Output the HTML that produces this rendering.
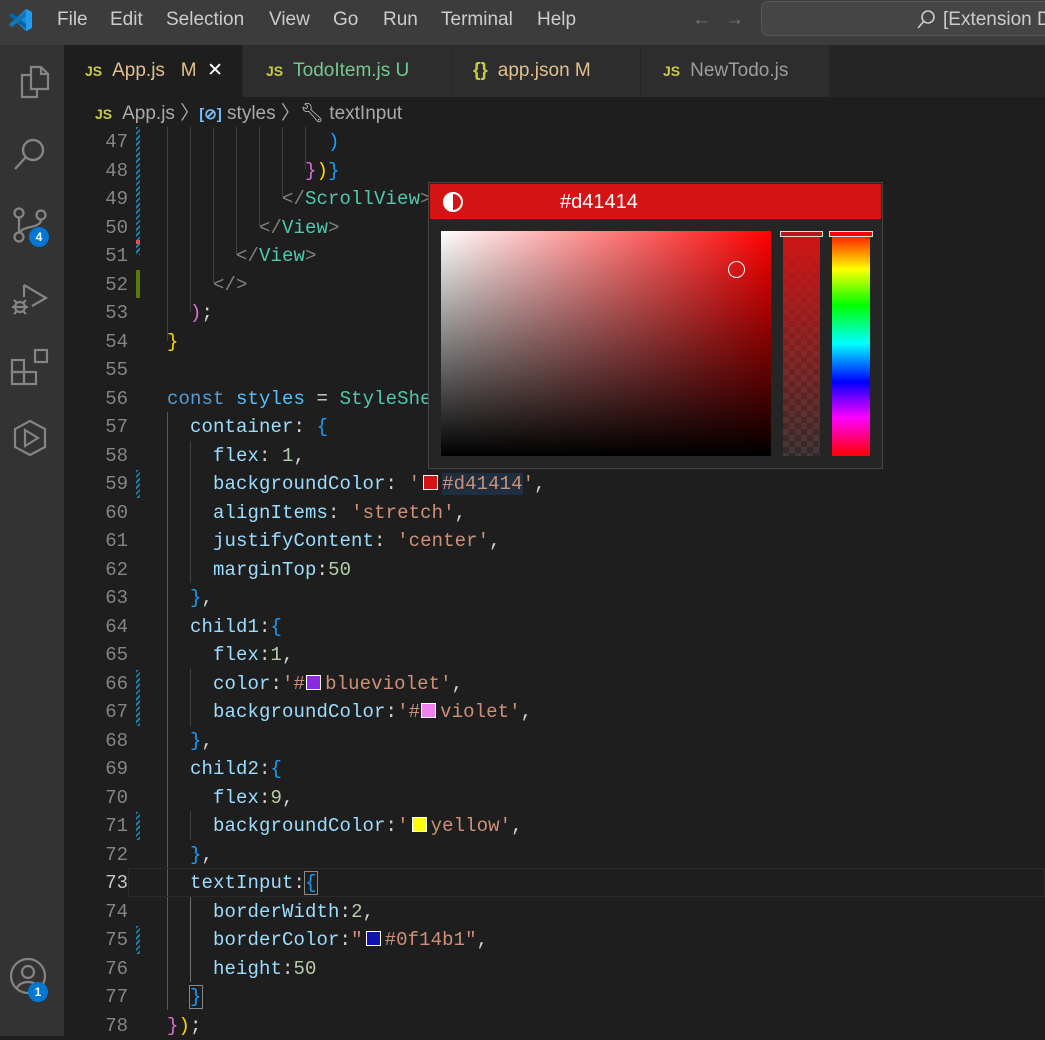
<!DOCTYPE html>
<html><head><meta charset="utf-8"><style>
*{margin:0;padding:0;box-sizing:border-box}
body{width:1045px;height:1036px;overflow:hidden;background:#1e1e1e;font-family:"Liberation Sans",sans-serif;position:relative}
.title{position:absolute;left:0;top:0;width:1045px;height:45px;background:#3c3c3c;color:#cccccc;font-size:19px;overflow:hidden}
.title span{position:absolute;top:9px;white-space:nowrap}
.act{position:absolute;left:0;top:45px;width:64px;height:991px;background:#333333}
.tabs{position:absolute;left:64px;top:45px;width:981px;height:52px;background:#252526}
.tab{position:absolute;top:0;height:52px;background:#2d2d2d;border-right:1px solid #252526;font-size:19px;line-height:52px;white-space:pre}
.js{color:#cbcb41;font-weight:bold;font-size:14px;margin-right:10px}
.bc{position:absolute;left:64px;top:97px;width:981px;height:33px;background:#1e1e1e;color:#a9a9a9;font-size:19px;line-height:33px;white-space:pre}
.ln{position:absolute;left:64px;width:64px;text-align:right;color:#858585;font-family:"Liberation Mono",monospace;font-size:19px;height:28.5px;line-height:28.5px}
.code{position:absolute;left:167px;font-family:"Liberation Mono",monospace;font-size:19px;height:28.5px;line-height:28.5px;white-space:pre;color:#d4d4d4;letter-spacing:0.1px}
.g{position:absolute;width:1px;background:#404040}
.dec{position:absolute;left:136px;width:4px;background:repeating-linear-gradient(135deg,#1b81a8 0 2px,#1e1e1e 2px 4px)}
.p{color:#9cdcfe}.s{color:#ce9178}.n{color:#b5cea8}.t{color:#808080}.c{color:#4ec9b0}.k{color:#569cd6}.v{color:#4fc1ff}
.b1{color:#ffd700}.b2{color:#da70d6}.b3{color:#179fff}
.sw{display:inline-block;width:15px;height:15px;border:1px solid #fff;vertical-align:-1px;margin:0 4px 0 3px}
.ic{position:absolute;left:10px}
.badge{position:absolute;width:20px;height:20px;border-radius:50%;background:#0078d4;color:#fff;font-size:12px;font-weight:bold;text-align:center;line-height:20px}
</style></head><body>
<div class="title">
<svg style="position:absolute;left:7px;top:7px" width="26" height="26" viewBox="0 0 26 26"><path d="M19 2 L25 5 V21 L19 24 L7 13 Z" fill="#2489ca"/><path d="M19 2 V24 L25 21 V5Z" fill="#1f9cf0"/><path d="M2 8 L5 6 L19 17 V22 L3 10Z" fill="#0065a9"/><path d="M2 18 L5 20 L19 9 V4 L3 16Z" fill="#1177bb"/></svg>
<span style="left:57px">File</span><span style="left:110px">Edit</span><span style="left:166px">Selection</span><span style="left:269px">View</span><span style="left:333px">Go</span><span style="left:383px">Run</span><span style="left:441px">Terminal</span><span style="left:537px">Help</span>
<span style="left:692px;color:#777">←</span><span style="left:725px;color:#777">→</span>
<div style="position:absolute;left:761px;top:1px;width:300px;height:35px;border:1px solid #555;border-radius:7px;background:#454545"></div>
<svg style="position:absolute;left:916px;top:9px" width="20" height="22" viewBox="0 0 20 22"><circle cx="12" cy="8" r="6" fill="none" stroke="#ccc" stroke-width="1.6"/><path d="M8 12 L2 19" stroke="#ccc" stroke-width="1.6"/></svg>
<span style="left:943px">[Extension De</span>
</div>
<div class="act">
<svg class="ic" style="top:18px" width="40" height="40" viewBox="0 0 40 40" fill="none" stroke="#858585" stroke-width="2.2"><path d="M21 4 H31 L38 11 V26 H21 Z"/><path d="M31 4 V11 H38"/><path d="M21 12 H12 V34 H27 V26"/></svg>
<svg class="ic" style="top:90px" width="40" height="40" viewBox="0 0 40 40" fill="none" stroke="#858585" stroke-width="2.4"><circle cx="23" cy="15" r="10"/><path d="M16 22 L5 34"/></svg>
<svg class="ic" style="top:160px" width="40" height="40" viewBox="0 0 40 40" fill="none" stroke="#858585" stroke-width="2.2"><circle cx="9" cy="8" r="4.5"/><circle cx="9" cy="32" r="4.5"/><circle cx="31" cy="10" r="4.5"/><path d="M9 12.5 V27.5 M31 14.5 C31 24 12 20 10 28"/></svg>
<div class="badge" style="left:29px;top:182px">4</div>
<svg class="ic" style="top:232px" width="40" height="40" viewBox="0 0 40 40" fill="none" stroke="#858585" stroke-width="2.2"><path d="M14 8 L36 21 L22 29"/><path d="M14 8 V20"/><circle cx="10" cy="30" r="5"/><path d="M2 30 H18 M4 23 L7 26 M16 23 L13 26 M4 37 L7 34 M16 37 L13 34"/></svg>
<svg class="ic" style="top:302px" width="40" height="40" viewBox="0 0 40 40" fill="none" stroke="#858585" stroke-width="2.2"><rect x="2" y="13" width="12" height="12"/><rect x="2" y="25" width="12" height="12"/><rect x="14" y="25" width="12" height="12"/><rect x="25" y="3" width="12" height="12"/></svg>
<svg class="ic" style="top:373px" width="40" height="40" viewBox="0 0 40 40" fill="none" stroke="#858585" stroke-width="2.2"><path d="M20 3 L35 11 V29 L20 37 L5 29 V11 Z"/><path d="M15 12 L28 20 L15 28 Z"/></svg>
<svg class="ic" style="top:913px" width="40" height="40" viewBox="0 0 40 40" fill="none" stroke="#858585" stroke-width="2.2"><circle cx="18" cy="18" r="17"/><circle cx="18" cy="14" r="6"/><path d="M7 30 C10 22 26 22 29 30"/></svg>
<div class="badge" style="left:28px;top:937px">1</div>
</div>
<div class="tabs">
<div class="tab" style="left:0;width:179px;background:#1e1e1e;padding-left:21px;color:#e2c08d"><span class="js">JS</span>App.js   M  <span style="color:#fff">✕</span></div>
<div class="tab" style="left:179px;width:210px;padding-left:23px;color:#73c991"><span class="js">JS</span>TodoItem.js U</div>
<div class="tab" style="left:389px;width:188px;padding-left:20px;color:#e2c08d"><span style="color:#cbcb41;font-weight:bold;margin-right:10px">{}</span>app.json M</div>
<div class="tab" style="left:577px;width:189px;padding-left:22px;color:#9d9d9d"><span class="js">JS</span>NewTodo.js</div>
</div>
<div class="bc"><span style="margin-left:31px" class="js">JS</span>App.js 〉<span style="color:#75beff;font-size:15px;font-weight:bold">[⊘]</span> styles 〉<span style="color:#ccc">🔧︎</span> textInput</div>

<div class="g" style="left:167px;top:127px;height:214px"></div>
<div class="g" style="left:190px;top:127px;height:185px"></div>
<div class="g" style="left:213px;top:127px;height:156px"></div>
<div class="g" style="left:236px;top:127px;height:128px"></div>
<div class="g" style="left:259px;top:127px;height:99px"></div>
<div class="g" style="left:282px;top:127px;height:71px"></div>
<div class="g" style="left:305px;top:127px;height:42px"></div>
<div class="g" style="left:167px;top:412px;height:598px;background:#5a5a5a"></div>
<div class="g" style="left:190px;top:441px;height:142px"></div>
<div class="g" style="left:190px;top:669px;height:57px"></div>
<div class="g" style="left:190px;top:811px;height:29px"></div>
<div class="g" style="left:190px;top:897px;height:85px;background:#707070"></div>

<div style="position:absolute;left:128px;top:868px;width:917px;height:29px;border:1px solid #2a2a2a"></div>

<div class="dec" style="top:127px;height:128px"></div>
<div style="position:absolute;left:136px;top:240px;width:4px;height:4px;background:#e05050"></div>
<div style="position:absolute;left:136px;top:270px;width:4px;height:28px;background:#587c0c"></div>
<div class="dec" style="top:470px;height:28px"></div>
<div class="dec" style="top:670px;height:56px"></div>
<div class="dec" style="top:812px;height:28px"></div>
<div class="dec" style="top:926px;height:28px"></div>

<div id="lines"></div>
<script>
var L=[
[47,'              <span class="b3">)</span>'],
[48,'            <span class="b2">}</span><span class="b1">)</span><span class="b3">}</span>'],
[49,'          <span class="t">&lt;/</span><span class="c">ScrollView</span><span class="t">&gt;</span>'],
[50,'        <span class="t">&lt;/</span><span class="c">View</span><span class="t">&gt;</span>'],
[51,'      <span class="t">&lt;/</span><span class="c">View</span><span class="t">&gt;</span>'],
[52,'    <span class="t">&lt;/&gt;</span>'],
[53,'  <span class="b2">)</span>;'],
[54,'<span class="b1">}</span>'],
[55,''],
[56,'<span class="k">const</span> <span class="v">styles</span> = <span class="c">StyleShe</span>'],
[57,'  <span class="p">container</span>: <span class="b3">{</span>'],
[58,'    <span class="p">flex</span>: <span class="n">1</span>,'],
[59,'    <span class="p">backgroundColor</span>: <span class="s">\'</span><span class="sw" style="background:#d41414"></span><span class="s" style="background:#1f2f3f">#d41414</span><span class="s">\'</span>,'],
[60,'    <span class="p">alignItems</span>: <span class="s">\'stretch\'</span>,'],
[61,'    <span class="p">justifyContent</span>: <span class="s">\'center\'</span>,'],
[62,'    <span class="p">marginTop</span>:<span class="n">50</span>'],
[63,'  <span class="b3">}</span>,'],
[64,'  <span class="p">child1</span>:<span class="b3">{</span>'],
[65,'    <span class="p">flex</span>:<span class="n">1</span>,'],
[66,'    <span class="p">color</span>:<span class="s">\'#</span><span class="sw" style="background:#8a2be2;margin-left:1px"></span><span class="s">blueviolet\'</span>,'],
[67,'    <span class="p">backgroundColor</span>:<span class="s">\'#</span><span class="sw" style="background:#ee82ee;margin-left:1px"></span><span class="s">violet\'</span>,'],
[68,'  <span class="b3">}</span>,'],
[69,'  <span class="p">child2</span>:<span class="b3">{</span>'],
[70,'    <span class="p">flex</span>:<span class="n">9</span>,'],
[71,'    <span class="p">backgroundColor</span>:<span class="s">\'</span><span class="sw" style="background:#ffff00"></span><span class="s">yellow\'</span>,'],
[72,'  <span class="b3">}</span>,'],
[73,'  <span class="p">textInput</span>:<span class="b3" style="outline:1px solid #888">{</span>'],
[74,'    <span class="p">borderWidth</span>:<span class="n">2</span>,'],
[75,'    <span class="p">borderColor</span>:<span class="s">"</span><span class="sw" style="background:#0f14b1"></span><span class="s">#0f14b1"</span>,'],
[76,'    <span class="p">height</span>:<span class="n">50</span>'],
[77,'  <span class="b3" style="outline:1px solid #888">}</span>'],
[78,'<span class="b2">}</span><span class="b1">)</span>;']
];
var h='';
L.forEach(function(l,i){var t=128+i*28.5;
h+='<div class="ln" style="top:'+t+'px;'+(l[0]==73?'color:#c6c6c6':'')+'">'+l[0]+'</div><div class="code" style="top:'+t+'px">'+l[1]+'</div>';});
document.getElementById('lines').innerHTML=h;
</script>

<div style="position:absolute;left:428px;top:182px;width:455px;height:287px;background:#252526;border:1px solid #454545">
<div style="position:absolute;left:1px;top:1px;width:451px;height:35px;background:#d41414;color:#fff;font-size:20px;line-height:36px">
<div style="position:absolute;left:13px;top:8px;width:20px;height:20px;border-radius:50%;border:2px solid #fff;background:linear-gradient(90deg,#fff 50%,transparent 50%)"></div>
<span style="position:absolute;left:130px">#d41414</span></div>
<div style="position:absolute;left:12px;top:48px;width:330px;height:225px;background:linear-gradient(to bottom,transparent,#000),linear-gradient(to right,#fff,#ff0000)"></div>
<div style="position:absolute;left:299px;top:78px;width:17px;height:17px;border-radius:50%;border:1.5px solid #fff"></div>
<div style="position:absolute;left:354px;top:48px;width:37px;height:225px;background:linear-gradient(to bottom,rgba(212,20,20,1),rgba(212,20,20,0.05)),repeating-conic-gradient(#3a3a3a 0 25%,#2a2a2a 0 50%) 0 0/12px 12px"></div>
<div style="position:absolute;left:403px;top:48px;width:38px;height:225px;background:linear-gradient(to bottom,#f00,#ff0 17%,#0f0 33%,#0ff 50%,#00f 67%,#f0f 83%,#f00)"></div>
<div style="position:absolute;left:351px;top:48px;width:43px;height:6px;border:1px solid #ddd;background:#b01a1a"></div>
<div style="position:absolute;left:400px;top:48px;width:44px;height:6px;border:1px solid #ddd;background:#f00"></div>
</div>
</body></html>
